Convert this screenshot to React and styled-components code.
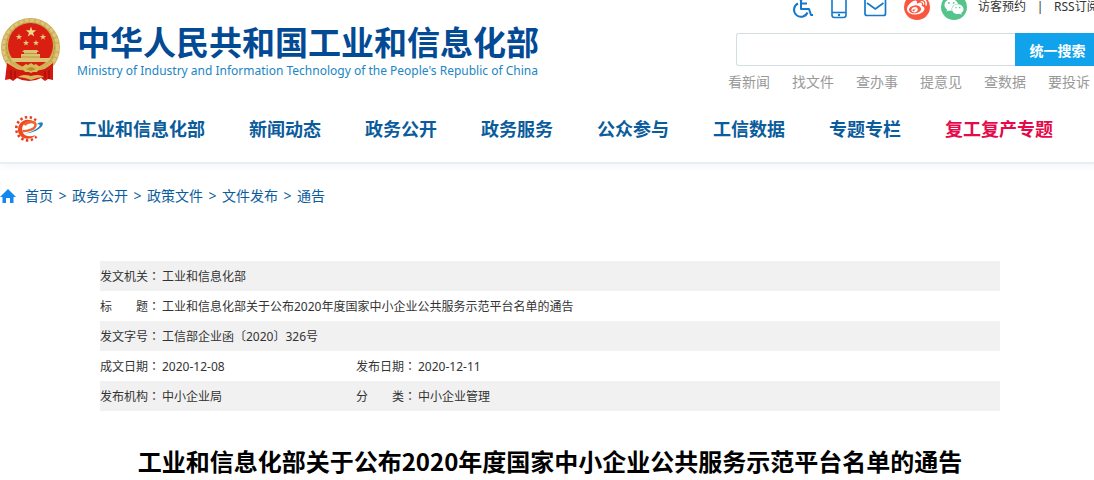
import styled, { createGlobalStyle } from "styled-components";
import { FaWeibo, FaWeixin } from "react-icons/fa";

const navItems = ["工业和信息化部", "新闻动态", "政务公开", "政务服务", "公众参与", "工信数据", "专题专栏"];
const hotLinks = ["看新闻", "找文件", "查办事", "提意见", "查数据", "要投诉"];
const crumbs = ["首页", "政务公开", "政策文件", "文件发布", "通告"];
const rows = [
    [["发文机关", "工业和信息化部"]],
    [["标　　题", "工业和信息化部关于公布2020年度国家中小企业公共服务示范平台名单的通告"]],
    [["发文字号", "工信部企业函〔2020〕326号"]],
    [["成文日期", "2020-12-08"], ["发布日期", "2020-12-11"]],
    [["发布机构", "中小企业局"], ["分　　类", "中小企业管理"]],
];

export default function App(){
    return (
    <>
        <GlobalStyle/>
        <Header>
            <Container>
                <Top>
                    <Brand href="#">
                        <Emblem/>
                        <BrandText>
                            <BrandName>中华人民共和国工业和信息化部</BrandName>
                            <BrandSub>Ministry of Industry and Information Technology of the People's Republic of China</BrandSub>
                        </BrandText>
                    </Brand>
                    <Tools>
                        <ToolBar>
                            <IconLink href="#" aria-label="无障碍"><WheelchairIcon/></IconLink>
                            <IconLink href="#" aria-label="手机版"><PhoneIcon/></IconLink>
                            <IconLink href="#" aria-label="邮箱"><MailIcon/></IconLink>
                            <RoundLink href="#" aria-label="微博" $color="#fa5741"><FaWeibo size={20}/></RoundLink>
                            <RoundLink href="#" aria-label="微信" $color="#54c48a"><FaWeixin size={20}/></RoundLink>
                            <TextLink href="#">访客预约</TextLink>
                            <Bar>|</Bar>
                            <TextLink href="#">RSS订阅</TextLink>
                        </ToolBar>
                        <Search>
                            <SearchInput type="text" aria-label="搜索"/>
                            <SearchButton type="button">统一搜索</SearchButton>
                        </Search>
                        <HotLinks>
                            {hotLinks.map((t) => <a href="#" key={t}>{t}</a>)}
                        </HotLinks>
                    </Tools>
                </Top>
                <Nav>
                    <NavLogo href="#" aria-label="首页"><GearLogo/></NavLogo>
                    {navItems.map((t) => <NavLink href="#" key={t}>{t}</NavLink>)}
                    <NavLink href="#" $hot>复工复产专题</NavLink>
                </Nav>
            </Container>
        </Header>
        <Container>
            <Crumbs aria-label="当前位置">
                <HomeIcon/>
                {crumbs.map((t, i) => (
                    <Crumb key={t}>
                        {i > 0 && <span>&gt;</span>}
                        <a href="#">{t}</a>
                    </Crumb>
                ))}
            </Crumbs>
            <Article>
                <Info>
                    <colgroup>
                        <LabelCol/><ValueCol/><LabelCol/><col/>
                    </colgroup>
                    <tbody>
                        {rows.map((cells) => (
                            <tr key={cells[0][0]}>
                                {cells.map(([label, value]) => (
                                    <Cells key={label} label={label} value={value} span={cells.length === 1 ? 3 : 1}/>
                                ))}
                            </tr>
                        ))}
                    </tbody>
                </Info>
                <Title>工业和信息化部关于公布2020年度国家中小企业公共服务示范平台名单的通告</Title>
            </Article>
        </Container>
    </>
    );
}

function Cells({ label, value, span }){
    return (
    <>
        <th scope="row">{label}<Colon>：</Colon></th>
        <td colSpan={span}>{value}</td>
    </>
    );
}

function star(cx, cy, r){
    const pts = [];
    for(let i = 0; i < 10; i++){
        const a = -Math.PI / 2 + (i * Math.PI) / 5;
        const d = i % 2 ? r * 0.4 : r;
        pts.push(`${(cx + d * Math.cos(a)).toFixed(2)},${(cy + d * Math.sin(a)).toFixed(2)}`);
    }
    return pts.join(" ");
}

function Emblem(){
    return (
        <svg width="61" height="66" viewBox="0 0 61 66" aria-hidden="true">
            <circle cx="30.500" cy="30.500" r="29.500" fill="#cdb05a"/>
            <circle cx="30.500" cy="30.500" r="27" fill="none" stroke="#dcc67c" strokeWidth="3" strokeDasharray="4 1.500"/>
            <circle cx="30.500" cy="30" r="24" fill="none" stroke="#bb9a45" strokeWidth="1.200" strokeDasharray="3 1.500"/>
            <circle cx="30.500" cy="28.500" r="22.500" fill="#d91e12"/>
            <polygon points={star(31, 15, 5.5)} fill="#efd98a"/>
            <polygon points={star(19, 20, 3.4)} fill="#e6ca73"/>
            <polygon points={star(43, 20, 3.4)} fill="#e6ca73"/>
            <polygon points={star(26, 26, 3.2)} fill="#e6ca73"/>
            <polygon points={star(36, 26, 3.2)} fill="#e6ca73"/>
            <path d="M24 33h13l2 2h-2v2h3v4h11l-3 4H13l-3-4h11v-4h3v-2h-2z" fill="#dcc272"/>
            <path d="M24 36.500h13M21 40h19" stroke="#b08a33" strokeWidth="0.800"/>
            <path d="M7 46c4 3 8 5 14 6l4 2 6-2 6 2 4-2c5-1 8-3 12-6v17l-5-1-3 2-4-3-5 2-7 1-7-1-5-2-4 3-3-2-5 1z" fill="#d3180f"/>
            <path d="M11 53v9M15 54v7M45 54v7M49 53v9" stroke="#98110b" strokeWidth="1.200"/>
            <path d="M10 45c4 5 9 7 15 7M51 45c-4 5-9 7-15 7" fill="none" stroke="#d2b35c" strokeWidth="3"/>
            <path d="M22 50l4-3 2 1 3-2 3 2 2-1 4 3-3 5h-4l-2 1-2-1h-4z" fill="#d8ba5b"/>
            <path d="M26 52l5-2 5 2-5 2z" fill="#b58b2f"/>
            <path d="M18 60c5-3 9-2 13-1 4-1 8-2 13 1l-7 1-6 2-6-2z" fill="#d6b95c"/>
        </svg>
    );
}

function WheelchairIcon(){
    return (
        <svg width="22" height="24" viewBox="0 0 22 24" fill="none" stroke="#1479cb" strokeWidth="2" strokeLinejoin="round" aria-hidden="true">
            <circle cx="9" cy="2.500" r="2"/>
            <path d="M9 5v9h8l2 6h2"/>
            <path d="M9 8.500h6"/>
            <path d="M6 8.500a7 7 0 1 0 9.500 9"/>
        </svg>
    );
}

function PhoneIcon(){
    return (
        <svg width="16" height="24" viewBox="0 0 16 24" fill="none" stroke="#1479cb" strokeWidth="1.600" aria-hidden="true">
            <rect x="1" y="1" width="14" height="21.500" rx="2.500"/>
            <path d="M1 17.500h14"/>
            <circle cx="8" cy="20" r="0.600" strokeWidth="1.200"/>
        </svg>
    );
}

function MailIcon(){
    return (
        <svg width="23" height="20" viewBox="0 0 23 20" fill="none" stroke="#1479cb" strokeWidth="1.700" aria-hidden="true">
            <rect x="1" y="1" width="20.500" height="17.500" rx="2"/>
            <path d="M3 6l8.300 6L19.500 6"/>
        </svg>
    );
}

function HomeIcon(){
    return (
        <svg width="16" height="14" viewBox="0 0 16 14" fill="#1389ee" aria-hidden="true">
            <path d="M8 0l8 8h-2.500v6H10V9H6v5H2.500V8H0z"/>
        </svg>
    );
}

function GearLogo(){
    return (
        <svg width="30" height="26" viewBox="0 0 30 26" fill="none" aria-hidden="true">
            <path d="M22 4.500A11.600 11.600 0 1 0 22.500 20.500" stroke="#e2401f" strokeWidth="2.600" strokeDasharray="2.400 2.400"/>
            <path d="M20 6C16 2.500 9.500 2.800 6 7.500C2.500 12.500 3.500 19 9 21.800C14 24 19 22 21.500 19C16 21.500 10 20.500 8.500 15.500C7 11 10 7 14 5.800C17 5 19.500 5.500 20 6z" fill="#ee4a20"/>
            <path d="M8.500 15C14 15.500 21.500 13 21.500 9C21.500 5 14 5 10.500 9" stroke="#f0602a" strokeWidth="2.400"/>
            <path d="M22.500 8.500C26 5.500 29.500 5.500 28.800 8.500C27.500 13 18 17.500 10.500 17.500C17 16.500 25.500 12 25.800 9.200C25.800 8 24 8 22.500 8.500z" fill="#1f7fc4"/>
        </svg>
    );
}

const GlobalStyle = createGlobalStyle`
    body{
        margin: 0;
        background-color: #ffffff;
        overflow-x: hidden;
        font-family: "Noto Sans", "Noto Sans CJK SC", sans-serif;
        font-size: 14px;
        line-height: 20px;
    }
    a{
        color: inherit;
        text-decoration: none;
    }
    svg{
        display: block;
        flex-shrink: 0;
    }
`

const Header = styled.header`
    min-width: 1100px;
    border-bottom: 2px solid #e9eef4;
    box-shadow: 0 2px 8px #f1f5fa;
`

const Container = styled.div`
    width: 1100px;
    margin: 0 auto;
`

const Top = styled.div`
    display: flex;
    justify-content: space-between;
    height: 96px;
`

const Brand = styled.a`
    display: flex;
    align-items: flex-start;
    gap: 16px;
    padding-top: 17px;
`

const BrandText = styled.div`
    white-space: nowrap;
    padding-top: 2px;
`

const BrandName = styled.div`
    font-family: "Noto Sans CJK SC", sans-serif;
    font-size: 33px;
    line-height: 44px;
    font-weight: 700;
    color: #034a95;
`

const BrandSub = styled.div`
    font-size: 12px;
    line-height: 16px;
    color: #2185c5;
`

const Tools = styled.div`
    width: 373px;
`

/* sits partly above the top edge of the window */
const ToolBar = styled.div`
    display: flex;
    align-items: center;
    height: 26px;
    margin-top: -6px;
    padding-left: 65px;
    font-size: 12px;
    color: #333333;
    white-space: nowrap;
`

const IconLink = styled.a`
    margin-right: 17px;
`

const RoundLink = styled.a`
    display: flex;
    align-items: center;
    justify-content: center;
    flex-shrink: 0;
    width: 26px;
    height: 26px;
    margin-right: 11px;
    border-radius: 50%;
    color: #ffffff;
    background-color: ${(p) => p.$color};
`

const TextLink = styled.a`
    line-height: 16px;
`

const Bar = styled.span`
    width: 28px;
    text-align: center;
`

const Search = styled.form`
    display: flex;
    height: 33px;
    margin-top: 13px;
    padding-left: 9px;
`

const SearchInput = styled.input`
    flex: 1;
    min-width: 0;
    box-sizing: border-box;
    border: 1px solid #d3dde2;
    border-right: none;
    border-radius: 3px 0 0 3px;
    padding: 0 10px;
    background-color: #ffffff;
`

const SearchButton = styled.button`
    width: 85px;
    border: none;
    padding: 0;
    font-family: inherit;
    font-size: 14px;
    font-weight: 700;
    color: #ffffff;
    background-color: #10a3ec;
`

const HotLinks = styled.div`
    display: flex;
    gap: 22px;
    margin-top: 6px;
    padding-left: 1px;
    color: #999999;
`

const Nav = styled.nav`
    display: flex;
    align-items: center;
    gap: 44px;
    height: 66px;
    font-size: 18px;
    font-weight: 700;
    white-space: nowrap;
`

const NavLogo = styled.a`
    width: 35px;
    box-sizing: border-box;
    padding-left: 14px;
`

const NavLink = styled.a`
    color: ${(p) => p.$hot ? "#e5084b" : "#0a5c9c"};
`

const Crumbs = styled.nav`
    display: flex;
    align-items: center;
    margin-top: 22px;
    color: #0a5c9c;
    svg{
        margin-right: 9px;
    }
`

const Crumb = styled.span`
    display: flex;
    span{
        width: 19px;
        text-align: center;
    }
`

const Article = styled.article`
    width: 900px;
    margin: 55px auto 0;
`

const Info = styled.table`
    width: 100%;
    table-layout: fixed;
    border-collapse: collapse;
    font-size: 12px;
    color: #333333;
    tr:nth-child(odd){
        background-color: #f1f1f1;
    }
    th, td{
        height: 28px;
        padding: 2px 0 0;
        font-weight: 400;
        text-align: left;
        white-space: nowrap;
    }
`

const LabelCol = styled.col`
    width: 62px;
`

const ValueCol = styled.col`
    width: 194px;
`

const Colon = styled.span`
    font-family: "Noto Sans CJK TC", sans-serif;
    line-height: 0;
`

const Title = styled.h1`
    margin: 32px 0 0;
    font-family: "Noto Sans CJK SC", sans-serif;
    font-size: 24px;
    line-height: 36px;
    font-weight: 700;
    text-align: center;
    white-space: nowrap;
    color: #000000;
`
